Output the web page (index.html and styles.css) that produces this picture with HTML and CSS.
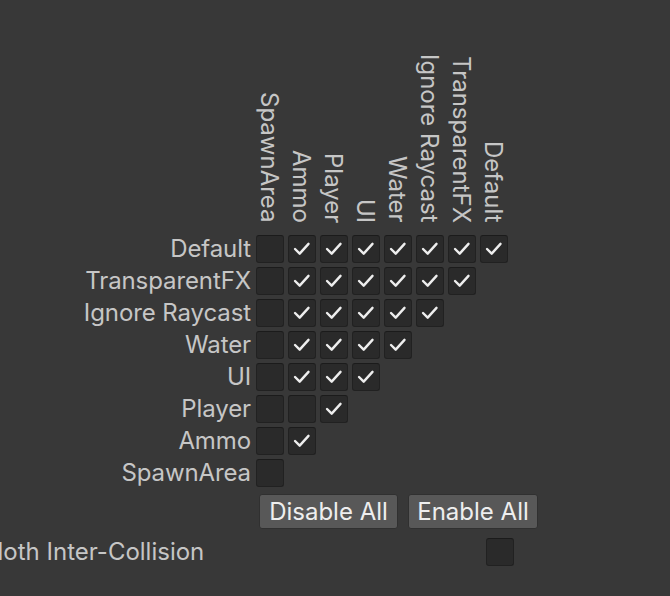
FILE: index.html
```html
<!DOCTYPE html>
<html>
<head>
<meta charset="utf-8">
<link rel="stylesheet" href="styles.css">
</head>
<body>
<div class="panel">
  <div class="header">
    <div class="corner"></div>
    <div class="col-label">SpawnArea</div>
    <div class="col-label">Ammo</div>
    <div class="col-label">Player</div>
    <div class="col-label">UI</div>
    <div class="col-label">Water</div>
    <div class="col-label">Ignore Raycast</div>
    <div class="col-label">TransparentFX</div>
    <div class="col-label">Default</div>
  </div>

  <div class="row">
    <div class="row-label">Default</div>
    <div class="cell"><span class="box"></span></div>
    <div class="cell"><span class="box on"><svg viewBox="0 0 28 28"><polyline points="6.5,14 11.5,19 21,8.5"/></svg></span></div>
    <div class="cell"><span class="box on"><svg viewBox="0 0 28 28"><polyline points="6.5,14 11.5,19 21,8.5"/></svg></span></div>
    <div class="cell"><span class="box on"><svg viewBox="0 0 28 28"><polyline points="6.5,14 11.5,19 21,8.5"/></svg></span></div>
    <div class="cell"><span class="box on"><svg viewBox="0 0 28 28"><polyline points="6.5,14 11.5,19 21,8.5"/></svg></span></div>
    <div class="cell"><span class="box on"><svg viewBox="0 0 28 28"><polyline points="6.5,14 11.5,19 21,8.5"/></svg></span></div>
    <div class="cell"><span class="box on"><svg viewBox="0 0 28 28"><polyline points="6.5,14 11.5,19 21,8.5"/></svg></span></div>
    <div class="cell"><span class="box on"><svg viewBox="0 0 28 28"><polyline points="6.5,14 11.5,19 21,8.5"/></svg></span></div>
  </div>

  <div class="row">
    <div class="row-label">TransparentFX</div>
    <div class="cell"><span class="box"></span></div>
    <div class="cell"><span class="box on"><svg viewBox="0 0 28 28"><polyline points="6.5,14 11.5,19 21,8.5"/></svg></span></div>
    <div class="cell"><span class="box on"><svg viewBox="0 0 28 28"><polyline points="6.5,14 11.5,19 21,8.5"/></svg></span></div>
    <div class="cell"><span class="box on"><svg viewBox="0 0 28 28"><polyline points="6.5,14 11.5,19 21,8.5"/></svg></span></div>
    <div class="cell"><span class="box on"><svg viewBox="0 0 28 28"><polyline points="6.5,14 11.5,19 21,8.5"/></svg></span></div>
    <div class="cell"><span class="box on"><svg viewBox="0 0 28 28"><polyline points="6.5,14 11.5,19 21,8.5"/></svg></span></div>
    <div class="cell"><span class="box on"><svg viewBox="0 0 28 28"><polyline points="6.5,14 11.5,19 21,8.5"/></svg></span></div>
  </div>

  <div class="row">
    <div class="row-label">Ignore Raycast</div>
    <div class="cell"><span class="box"></span></div>
    <div class="cell"><span class="box on"><svg viewBox="0 0 28 28"><polyline points="6.5,14 11.5,19 21,8.5"/></svg></span></div>
    <div class="cell"><span class="box on"><svg viewBox="0 0 28 28"><polyline points="6.5,14 11.5,19 21,8.5"/></svg></span></div>
    <div class="cell"><span class="box on"><svg viewBox="0 0 28 28"><polyline points="6.5,14 11.5,19 21,8.5"/></svg></span></div>
    <div class="cell"><span class="box on"><svg viewBox="0 0 28 28"><polyline points="6.5,14 11.5,19 21,8.5"/></svg></span></div>
    <div class="cell"><span class="box on"><svg viewBox="0 0 28 28"><polyline points="6.5,14 11.5,19 21,8.5"/></svg></span></div>
  </div>

  <div class="row">
    <div class="row-label">Water</div>
    <div class="cell"><span class="box"></span></div>
    <div class="cell"><span class="box on"><svg viewBox="0 0 28 28"><polyline points="6.5,14 11.5,19 21,8.5"/></svg></span></div>
    <div class="cell"><span class="box on"><svg viewBox="0 0 28 28"><polyline points="6.5,14 11.5,19 21,8.5"/></svg></span></div>
    <div class="cell"><span class="box on"><svg viewBox="0 0 28 28"><polyline points="6.5,14 11.5,19 21,8.5"/></svg></span></div>
    <div class="cell"><span class="box on"><svg viewBox="0 0 28 28"><polyline points="6.5,14 11.5,19 21,8.5"/></svg></span></div>
  </div>

  <div class="row">
    <div class="row-label">UI</div>
    <div class="cell"><span class="box"></span></div>
    <div class="cell"><span class="box on"><svg viewBox="0 0 28 28"><polyline points="6.5,14 11.5,19 21,8.5"/></svg></span></div>
    <div class="cell"><span class="box on"><svg viewBox="0 0 28 28"><polyline points="6.5,14 11.5,19 21,8.5"/></svg></span></div>
    <div class="cell"><span class="box on"><svg viewBox="0 0 28 28"><polyline points="6.5,14 11.5,19 21,8.5"/></svg></span></div>
  </div>

  <div class="row">
    <div class="row-label">Player</div>
    <div class="cell"><span class="box"></span></div>
    <div class="cell"><span class="box"></span></div>
    <div class="cell"><span class="box on"><svg viewBox="0 0 28 28"><polyline points="6.5,14 11.5,19 21,8.5"/></svg></span></div>
  </div>

  <div class="row">
    <div class="row-label">Ammo</div>
    <div class="cell"><span class="box"></span></div>
    <div class="cell"><span class="box on"><svg viewBox="0 0 28 28"><polyline points="6.5,14 11.5,19 21,8.5"/></svg></span></div>
  </div>

  <div class="row">
    <div class="row-label">SpawnArea</div>
    <div class="cell"><span class="box"></span></div>
  </div>

  <div class="actions">
    <button class="btn btn-disable">Disable All</button>
    <button class="btn btn-enable">Enable All</button>
  </div>

  <div class="cloth-row">
    <div class="cloth-label">Cloth Inter-Collision</div>
    <span class="box cloth-box"></span>
  </div>
</div>
</body>
</html>
```

FILE: styles.css
```css
html, body {
  margin: 0;
  padding: 0;
  background: #383838;
  overflow: hidden;
}

body {
  width: 670px;
  height: 596px;
  font-family: Inter, "Noto Sans", sans-serif;
  font-size: 24px;
  color: #c6c6c6;
}

.panel {
  padding-top: 40px;
}

.header {
  display: flex;
  height: 193px;
}

.corner {
  width: 254px;
  flex: none;
}

.col-label {
  width: 32px;
  flex: none;
  writing-mode: vertical-rl;
  text-align: end;
  line-height: 33px;
  padding-bottom: 10px;
  box-sizing: border-box;
  white-space: nowrap;
}

.row {
  display: flex;
  height: 32px;
}

.row-label {
  width: 254px;
  flex: none;
  box-sizing: border-box;
  padding-right: 3px;
  text-align: right;
  line-height: 32px;
  white-space: nowrap;
  letter-spacing: -0.1px;
}

.cell {
  width: 32px;
  height: 32px;
  flex: none;
  display: flex;
  align-items: center;
  justify-content: center;
}

.box {
  display: block;
  width: 28px;
  height: 28px;
  box-sizing: border-box;
  background: #2a2a2a;
  border: 1px solid #212121;
  border-top-color: #1b1b1b;
  border-radius: 3px;
}

.box svg {
  display: block;
  width: 26px;
  height: 26px;
}

.box polyline {
  fill: none;
  stroke: #eeeeee;
  stroke-width: 2.6;
  stroke-linecap: round;
  stroke-linejoin: round;
}

.actions {
  display: flex;
  gap: 10px;
  padding-left: 259px;
  margin-top: 5px;
}

.btn {
  height: 35px;
  box-sizing: border-box;
  background: #585858;
  border: 1px solid #303030;
  border-radius: 3px;
  color: #eeeeee;
  font-family: Inter, "Noto Sans", sans-serif;
  font-size: 24px;
  line-height: 32px;
  padding: 0;
}

.btn-disable {
  width: 139px;
}

.btn-enable {
  width: 130px;
}

.cloth-row {
  display: flex;
  align-items: center;
  margin-top: 9px;
  height: 28px;
}

.cloth-label {
  width: 486px;
  flex: none;
  margin-left: -20px;
  white-space: nowrap;
  line-height: 28px;
}

.cloth-box {
  margin-left: 20px;
}
```
